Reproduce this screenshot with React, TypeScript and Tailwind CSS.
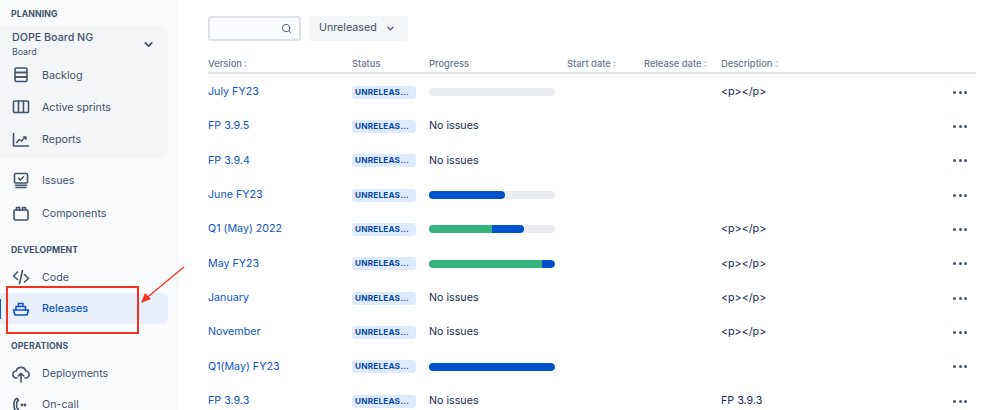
import { ChevronDown, Search } from "lucide-react";
import type { ReactNode } from "react";

const ink = "#42526e";

function Icon({ children }: { children: ReactNode }) {
  return (
    <svg width="18" height="18" viewBox="0 0 18 18" fill="none" stroke="currentColor" strokeWidth="1.6" strokeLinecap="round" strokeLinejoin="round">
      {children}
    </svg>
  );
}

const icons: Record<string, ReactNode> = {
  backlog: (
    <>
      <rect x="3" y="2" width="12" height="4.5" rx="1.5" />
      <rect x="3" y="6.5" width="12" height="4.5" />
      <rect x="3" y="11" width="12" height="4.5" rx="1.5" />
    </>
  ),
  sprints: (
    <>
      <rect x="1.5" y="3" width="15" height="11.5" rx="1" />
      <path d="M6.5 3v11.5M11.5 3v11.5" />
    </>
  ),
  reports: (
    <>
      <path d="M1.5 2.5v12.5h15" />
      <path d="M4.5 11.5l3-3 2 1.5 4-4M11.5 6h2.5v2.5" strokeWidth="1.4" />
    </>
  ),
  issues: (
    <>
      <rect x="2.5" y="1.5" width="13" height="9.5" rx="1.2" />
      <path d="M6.5 6.2l1.8 1.8 3.2-3.2M3.5 13.2h11M4 15.5h10" />
    </>
  ),
  components: (
    <>
      <rect x="2" y="5" width="14" height="10" rx="1.2" />
      <path d="M4.5 5V2.5h3V5M10.5 5V2.5h3V5" />
    </>
  ),
  code: <path d="M5.5 4L1.5 8l4 3.5M12.5 6.5l4 4-4 3.5M10.5 2.5l-3 13" />,
  releases: (
    <>
      <path d="M1.5 10h15l-1.5 5H3z" />
      <path d="M4 10V6.5h9.5V10M6.5 6.5V3.5h4.5v3" />
    </>
  ),
  deployments: (
    <>
      <path d="M5 13H4.5a3.5 3.5 0 0 1-.3-7 5 5 0 0 1 9.6 0 3.5 3.5 0 0 1-.3 7H13" />
      <path d="M9 17V8.5M6.2 11L9 8.2l2.800 2.800" />
    </>
  ),
  oncall: (
    <>
      <path d="M5 2.500C2.500 3 2 5 2 8.500s.5 6.500 3 7.500l1.500-2.500-1.500-1.500C4.500 11 4.500 7 5 5.500l1.500-1z" />
      <circle cx="10" cy="9" r=".6" fill="currentColor" />
      <circle cx="13" cy="9" r=".6" fill="currentColor" />
    </>
  ),
};

function SectionLabel({ children, className }: { children: ReactNode; className: string }) {
  return <div className={`pl-[11px] text-[8.700px] leading-[12px] font-bold tracking-[0.1px] text-[#42526e] ${className}`}>{children}</div>;
}

function NavItem({ icon, label, className = "h-[33px]" }: { icon: string; label: string; className?: string }) {
  return (
    <div className={`flex items-center gap-[12px] pl-3 text-[10.700px] ${className}`} style={{ color: ink }}>
      <Icon>{icons[icon]}</Icon>
      <span className="pt-[2px]">{label}</span>
    </div>
  );
}

function Sidebar() {
  return (
    <aside className="h-[410px] w-[178px] shrink-0 overflow-hidden border-r border-[#f0f1f4] bg-[#fafbfc] pr-[9px]">
      <SectionLabel className="pt-2">PLANNING</SectionLabel>
      <div className="mt-[5px] h-[134px] rounded-r-md bg-[#f4f5f7]">
        <div className="mb-[1px] flex items-center pt-[5px] pr-[13px] pl-3">
          <div className="flex-1">
            <div className="text-[10.700px] leading-[15px] font-medium text-[#42526e]">DOPE Board NG</div>
            <div className="text-[8.800px] leading-[13px] text-[#42526e]">Board</div>
          </div>
          <ChevronDown size={13} strokeWidth={3} color={ink} />
        </div>
        <NavItem icon="backlog" label="Backlog" className="h-[32px]" />
        <NavItem icon="sprints" label="Active sprints" className="h-[32px]" />
        <NavItem icon="reports" label="Reports" className="h-[33px]" />
      </div>
      <NavItem icon="issues" label="Issues" className="mt-[5px] h-[33px]" />
      <NavItem icon="components" label="Components" className="h-[33px]" />
      <SectionLabel className="pt-[14px]">DEVELOPMENT</SectionLabel>
      <NavItem icon="code" label="Code" className="mt-[5px] h-[32px]" />
      <div className="relative flex h-[31px] items-center gap-[12px] rounded-r-md bg-[#e9f0fb] pl-3 text-[10.700px] font-medium text-[#0b56c6]">
        <span className="absolute top-[6px] left-0 h-5 w-[1px] bg-[#0b56c6]" />
        <Icon>{icons.releases}</Icon>
        <span className="pt-[2px]">Releases</span>
      </div>
      <SectionLabel className="pt-[16px]">OPERATIONS</SectionLabel>
      <NavItem icon="deployments" label="Deployments" className="mt-[5px] h-[33px]" />
      <NavItem icon="oncall" label="On-call" className="h-[29px]" />
    </aside>
  );
}

const cols = ["w-[144px]", "w-[77px]", "w-[138px]", "w-[77px]", "w-[77px]", "flex-1"];

function SortMark() {
  return (
    <svg width="5" height="8" viewBox="0 0 5 8" className="ml-[1px]" fill="#d3d7df">
      <path d="M2.500 0.500L4.500 3H.5zM2.500 7.500L.5 5h4z" />
    </svg>
  );
}

type Row = { name: string; issues?: boolean; green?: number; blue?: number; desc?: string };

const rows: Row[] = [
  { name: "July FY23", green: 0, blue: 0, desc: "<p></p>" },
  { name: "FP 3.9.5", issues: true },
  { name: "FP 3.9.4", issues: true },
  { name: "June FY23", green: 0, blue: 60 },
  { name: "Q1 (May) 2022", green: 50, blue: 25, desc: "<p></p>" },
  { name: "May FY23", green: 90, blue: 10, desc: "<p></p>" },
  { name: "January", issues: true, desc: "<p></p>" },
  { name: "November", issues: true, desc: "<p></p>" },
  { name: "Q1(May) FY23", green: 0, blue: 100 },
  { name: "FP 3.9.3", issues: true, desc: "FP 3.9.3" },
];

function Progress({ green = 0, blue = 0 }: { green?: number; blue?: number }) {
  return (
    <div className="flex h-2 w-[126px] overflow-hidden rounded-full bg-[#ebecf0]">
      <div className="h-full bg-[#36b37e]" style={{ width: `${green}%` }} />
      <div className="h-full rounded-r-full bg-[#0052cc]" style={{ width: `${blue}%` }} />
    </div>
  );
}

function ReleaseRow({ row }: { row: Row }) {
  return (
    <div className="flex h-[34.33px] items-center text-[10.700px] text-[#172b4d]">
      <div className={`${cols[0]} text-[#0b56c6]`}>{row.name}</div>
      <div className={cols[1]}>
        <span className="block h-[13px] w-[64px] rounded-[3px] bg-[#deebff] pl-[3px] text-[8.200px] leading-[13px] font-bold tracking-[0.2px] whitespace-nowrap text-[#0747a6]">
          UNRELEAS...
        </span>
      </div>
      <div className={cols[2]}>{row.issues ? "No issues" : <Progress green={row.green} blue={row.blue} />}</div>
      <div className={cols[3]} />
      <div className={cols[4]} />
      <div className={cols[5]}>{row.desc}</div>
      <div className="mr-[9px] flex gap-[2.500px]">
        <span className="size-[3px] rounded-full bg-[#42526e]" />
        <span className="size-[3px] rounded-full bg-[#42526e]" />
        <span className="size-[3px] rounded-full bg-[#42526e]" />
      </div>
    </div>
  );
}

function ReleasesTable() {
  const headers = ["Version", "Status", "Progress", "Start date", "Release date", "Description"];
  return (
    <main className="flex-1 overflow-hidden pt-4 pr-[23px] pl-[30px]">
      <div className="flex gap-2">
        <div className="flex h-[25px] w-[93px] items-center justify-end rounded-[3px] border-2 border-[#dfe1e6] bg-[#fafbfc] pr-[7px]">
          <Search size={11} color={ink} strokeWidth={2} />
        </div>
        <div className="flex h-[25px] w-[99px] items-center gap-[8px] rounded-[3px] bg-[#f4f5f7] pl-[10px] text-[10.700px] text-[#42526e]">
          Unreleased
          <ChevronDown size={11} strokeWidth={3} />
        </div>
      </div>
      <div className="mt-[9px] flex h-[24px] items-center border-b-2 border-[#e4e6ea] pt-[6px] text-[9.400px] font-medium text-[#6b778c]">
        {headers.map((h, i) => (
          <div key={h} className={`flex items-center ${cols[i]}`}>
            {h}
            {i !== 1 && i !== 2 && <SortMark />}
          </div>
        ))}
      </div>
      <div className="pt-[1px]">
        {rows.map((row) => (
          <ReleaseRow key={row.name} row={row} />
        ))}
      </div>
    </main>
  );
}

export default function App() {
  return (
    <div className="relative flex h-[410px] w-[999px] overflow-hidden bg-white font-['Inter','Liberation_Sans',sans-serif]">
      <Sidebar />
      <ReleasesTable />
      {/* red annotation on top of the screenshot */}
      <div className="absolute top-[286px] left-[6px] h-[48px] w-[133px] border-2 border-[#f5321e]" />
      <svg className="absolute top-[262px] left-[136px]" width="52" height="44" viewBox="0 0 52 44" fill="none">
        <path d="M48 5L8 38" stroke="#f5321e" strokeWidth="1.300" />
        <path d="M5 41L9 31L15 37Z" fill="#f5321e" />
      </svg>
    </div>
  );
}
